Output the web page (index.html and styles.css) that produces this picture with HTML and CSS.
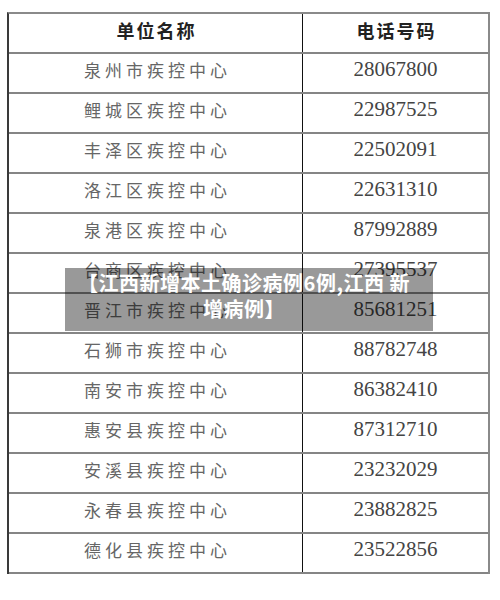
FILE: index.html
```html
<!DOCTYPE html>
<html lang="zh">
<head>
<meta charset="utf-8">
<link rel="stylesheet" href="styles.css">
</head>
<body>
<div class="page">
  <div class="table">
    <div class="row head"><div class="cell name">单位名称</div><div class="cell tel">电话号码</div></div>
    <div class="row"><div class="cell name">泉州市疾控中心</div><div class="cell num">28067800</div></div>
    <div class="row"><div class="cell name">鲤城区疾控中心</div><div class="cell num">22987525</div></div>
    <div class="row"><div class="cell name">丰泽区疾控中心</div><div class="cell num">22502091</div></div>
    <div class="row"><div class="cell name">洛江区疾控中心</div><div class="cell num">22631310</div></div>
    <div class="row"><div class="cell name">泉港区疾控中心</div><div class="cell num">87992889</div></div>
    <div class="row"><div class="cell name">台商区疾控中心</div><div class="cell num">27395537</div></div>
    <div class="row"><div class="cell name">晋江市疾控中心</div><div class="cell num">85681251</div></div>
    <div class="row"><div class="cell name">石狮市疾控中心</div><div class="cell num">88782748</div></div>
    <div class="row"><div class="cell name">南安市疾控中心</div><div class="cell num">86382410</div></div>
    <div class="row"><div class="cell name">惠安县疾控中心</div><div class="cell num">87312710</div></div>
    <div class="row"><div class="cell name">安溪县疾控中心</div><div class="cell num">23232029</div></div>
    <div class="row"><div class="cell name">永春县疾控中心</div><div class="cell num">23882825</div></div>
    <div class="row"><div class="cell name">德化县疾控中心</div><div class="cell num">23522856</div></div>
  </div>
  <div class="banner">【江西新增本土确诊病例6例,江西 新增病例】</div>
</div>
</body>
</html>
```
FILE: styles.css
```css
html, body {
  margin: 0;
  padding: 0;
  background: #fff;
}
.page {
  position: relative;
  width: 500px;
  height: 600px;
  padding-top: 12px;
  box-sizing: border-box;
}
.table {
  margin-left: 7px;
  width: 483px;
  box-sizing: border-box;
  border-left: 2px solid #3a3a3a;
  border-right: 2px solid #8a8a8a;
  border-top: 2px solid #8a8a8a;
}
.row {
  display: grid;
  grid-template-columns: 294px 1fr;
  height: 40px;
  box-sizing: border-box;
  border-bottom: 2px solid #858585;
}
.cell {
  display: flex;
  align-items: center;
  justify-content: center;
  padding-bottom: 7px;
  box-sizing: border-box;
}
.row .cell:first-child {
  border-right: 1px solid #111;
}
.name {
  font-family: "Noto Sans CJK SC", sans-serif;
  font-size: 17px;
  letter-spacing: 4px;
  padding-left: 4px;
  color: #666;
  font-weight: 400;
}
.num {
  font-family: "Liberation Serif", serif;
  font-size: 21px;
  color: #444;
}
.head .cell {
  font-family: "Noto Sans CJK SC", sans-serif;
  font-weight: 700;
  font-size: 18px;
  letter-spacing: 2px;
  color: #222;
  padding-left: 2px;
}
.banner {
  position: absolute;
  left: 65px;
  top: 268px;
  width: 368px;
  height: 63px;
  box-sizing: border-box;
  padding: 2px 14px 0 4px;
  background: rgba(0, 0, 0, 0.4);
  color: #fff;
  font-family: "Noto Sans CJK SC", sans-serif;
  font-weight: 700;
  font-size: 20px;
  letter-spacing: 0.5px;
  line-height: 26px;
  text-align: center;
}
```
